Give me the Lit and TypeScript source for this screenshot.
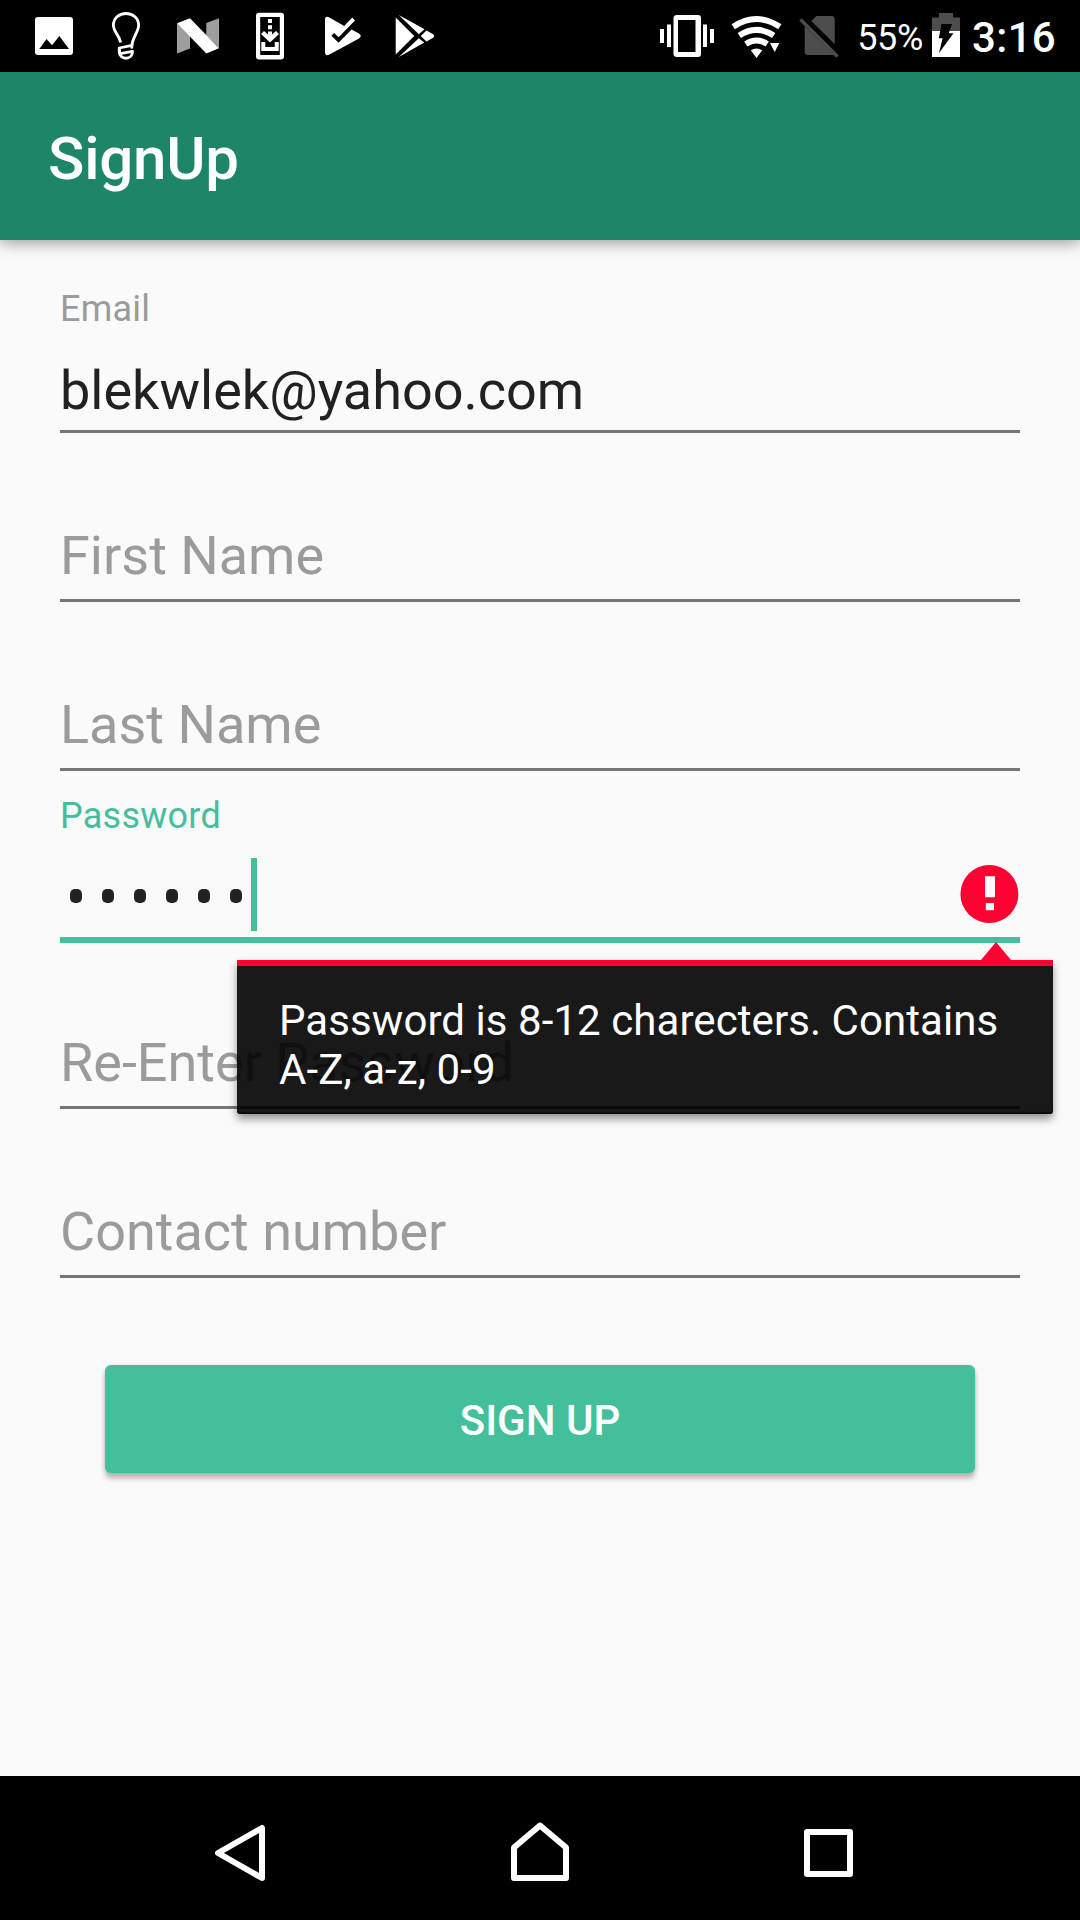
import { LitElement, html, css, svg, TemplateResult, SVGTemplateResult } from "lit";
import { customElement, property } from "lit/decorators.js";
import { classMap } from "lit/directives/class-map.js";

/* Notification glyphs, each drawn in a 72x72 cell. */
const notifications: SVGTemplateResult[] = [
  svg`<path fill="#fff" fill-rule="evenodd" d="M20 17H52Q55 17 55 20V52Q55 55 52 55H20Q17 55 17 52V20Q17 17 20 17ZM21.3 49H51L41.3 36L34 45.3L28.6 39Z"/>`,
  svg`<g fill="none" stroke="#fff" stroke-width="2.8" stroke-linejoin="round">
    <path d="M30.6 42.5C29.5 35 23.4 32 23.4 25.3C23.4 18.2 29 13.5 36 13.5S48.6 18.2 48.6 25.3C48.6 32 42.5 37 42 45.3L29.2 48V51.5C29.2 60.5 42.5 60.5 42.5 51.4L30.5 53.6"/>
    <path d="M29.4 47.5V52M41.8 44V48.5"/></g>`,
  svg`<path fill="#9e9e9e" d="M15 23L28 35.8V48.5L15 53.5ZM44.3 23L57 18.3V48L44.3 35.5Z"/>
    <path fill="#fff" d="M15 23.2L28 18.2L57 48.2L44.4 53.5Z"/>`,
  svg`<path fill="#fff" fill-rule="evenodd" d="M24 12.7H46Q49 12.7 49 15.7V56.6Q49 59.6 46 59.6H24Q21 59.6 21 56.6V15.7Q21 12.7 24 12.7ZM25.2 17V55H44.8V17Z" transform="translate(1 0)"/>
    <path fill="#fff" d="M34 19H38V23H34ZM34 25.3H38V29.3H34ZM34 31.5H38V34.5L42 31L45 34L36 42.6L27 34L30 31L34 34.5ZM27.3 42H31.3V47H40.7V42H44.7V51H27.3Z"/>`,
  svg`<path fill="#fff" d="M19 20Q19 15.5 23 17.3L38.2 26L46.2 17.6L49 20.4L32.6 37.3L28.2 33L25.4 35.7L32.6 42.8L45.5 29.6L53 33.6Q56.6 36 53 38.4L23 54.7Q19 56.3 19 52Z"/>`,
  svg`<path fill="#fff" d="M17.7 17.5L36.2 36L17.7 54.5ZM20.8 15L46.5 29.3L40.8 34.2ZM48.5 30.5L54.8 34Q57.5 36 54.8 38L48.5 41.6L42.8 36ZM40.8 38.2L46.3 42.6L20.8 57Z"/>`,
];

@customElement("status-bar")
export class StatusBar extends LitElement {
  static styles = css`
    :host { display: flex; height: 72px; background: #000; color: #fff; justify-content: space-between; }
    .left { display: flex; padding-left: 18px; }
    .right { display: flex; align-items: center; padding-right: 24px; }
    svg { display: block; flex: none; }
    .percent { font-size: 36px; line-height: 72px; margin: 3px 9px 0 18px; letter-spacing: -0.3px; }
    .clock { font-size: 42px; font-weight: 500; line-height: 72px; margin: 4px 0 0 12px; letter-spacing: 0.3px; }
  `;
  render() {
    return html`
      <div class="left">
        ${notifications.map((g) => html`<svg width="72" height="72" viewBox="0 0 72 72">${g}</svg>`)}
      </div>
      <div class="right">
        <svg width="54" height="72" viewBox="660 0 54 72" fill="#fff">
          <path fill-rule="evenodd" d="M677 15H698Q701 15 701 18V54Q701 57 698 57H677Q673.5 57 673.5 54V18Q673.5 15 677 15ZM678 20V52H695.5V20Z"/>
          <path d="M660 29h4v14h-4ZM667 24.5h4v22.5h-4ZM703 24.5h4v22.5h-4ZM710 29h4v14h-4Z"/>
        </svg>
        <svg width="85" height="72" viewBox="714 0 85 72" fill="none" stroke="#fff" stroke-width="6">
          <path d="M733.2 26.8Q756.5 11.3 779.8 26.8"/>
          <path d="M739.3 35.5Q756.5 24.3 773.7 35.5"/>
          <path d="M745.8 44Q756.5 37 767.2 44"/>
          <path fill="#fff" stroke="none" d="M750.8 50.3Q756.5 46.5 762.3 50.3L756.5 58ZM770 43H779.3L774.7 52Z"/>
        </svg>
        <svg width="40" height="72" viewBox="799 0 40 72">
          <path fill="#4d4d4d" d="M816.3 16H831.5Q834.7 16 834.7 19V44L811.3 21ZM804.7 26.2L834 55Q833 55 831.5 55H808Q804.7 55 804.7 52Z"/>
          <path stroke="#4d4d4d" stroke-width="3.4" d="M800.5 19.5L837.5 56.5"/>
        </svg>
        <div class="percent">55%</div>
        <svg width="28" height="72" viewBox="932 0 28 72">
          <path fill="#4d4d4d" d="M939 13H953V17.5H960V31H932V17.5H939Z"/>
          <path fill="#fff" d="M932 31H960V57H932Z"/>
          <path fill="#000" d="M941.5 24H952L948.7 33.3H953.5L939 53L942.6 38.3H938.8Z"/>
        </svg>
        <div class="clock">3:16</div>
      </div>`;
  }
}

@customElement("form-field")
export class FormField extends LitElement {
  @property() label = "";
  @property() value = "";
  @property({ type: Boolean }) active = false;
  @property({ type: Boolean }) secret = false;

  static styles = css`
    :host { display: block; height: 169px; box-sizing: border-box; }
    .field { display: flex; flex-direction: column; height: 169px; }
    .label { flex: none; height: 46px; line-height: 42px; padding-top: 22px; font-size: 36px; letter-spacing: 0.25px; color: #9b9b9b; }
    .active .label { color: #44bf9c; }
    .row { flex: none; display: flex; align-items: center; height: 96px; line-height: 96px; font-size: 54px; color: #212121; }
    .text { padding-top: 17px; white-space: pre; }
    .hint { padding-top: 10px; color: #9b9b9b; }
    .line { flex: none; height: 3px; background: #757575; }
    .active .line { height: 6px; background: #44bf9c; }
    .dots { display: flex; gap: 20px; padding: 14px 9px 0 10px; }
    .dot { width: 12px; height: 14px; border-radius: 5px; background: #212121; }
    .cursor { width: 6px; height: 73px; background: #44bf9c; margin-top: 11px; }
    .error { margin: 10px 1px 0 auto; display: block; }
  `;

  private entry(): TemplateResult {
    if (this.secret && this.value) {
      return html`
        <div class="dots">${[...this.value].map(() => html`<i class="dot"></i>`)}</div>
        <div class="cursor"></div>
        <svg class="error" width="60" height="60" viewBox="0 0 60 60">
          <circle cx="30.4" cy="30" r="29" fill="#ff0032"/>
          <path fill="#fafafa" d="M26 12.2H36V33.3H26ZM26.8 39H35V46.2H26.8Z"/>
        </svg>`;
    }
    return this.value
      ? html`<div class="text">${this.value}</div>`
      : html`<div class="text hint">${this.label}</div>`;
  }

  render() {
    return html`<div class=${classMap({ field: true, active: this.active })}>
      <div class="label">${this.value ? this.label : ""}</div>
      <div class="row">${this.entry()}</div>
      <div class="line"></div>
    </div>`;
  }
}

@customElement("app-root")
export class AppRoot extends LitElement {
  static styles = css`
    :host {
      display: flex; flex-direction: column; width: 1080px; height: 1920px; overflow: hidden;
      background: #fafafa; font-family: Roboto, "Liberation Sans", sans-serif;
    }
    .bar {
      height: 168px; flex: none; box-sizing: border-box; padding: 3px 48px 0; line-height: 168px;
      background: #1e8668; color: #fff; font-size: 60px; font-weight: 500; letter-spacing: -0.2px;
      box-shadow: 0 3px 14px rgba(0, 0, 0, 0.38);
    }
    .form { flex: 1; padding: 26px 60px 0; display: flex; flex-direction: column; }
    .anchor { position: relative; }
    .popup {
      position: absolute; left: 177px; top: 187px; width: 816px; height: 154px; box-sizing: border-box;
      border-top: 6px solid #ff0032; padding: 30px 0 0 42px; color: #fff; font-size: 42px; line-height: 49px;
      background: rgba(0, 0, 0, 0.9); background-clip: padding-box; border-radius: 0 0 3px 3px;
      white-space: nowrap; letter-spacing: 0.07px;
      box-shadow: 0 5px 9px rgba(0, 0, 0, 0.42), inset 0 -2px 1px rgba(0, 0, 0, 0.6);
    }
    .tip { position: absolute; left: 921px; top: 169px; z-index: 1; display: block; }
    .submit {
      box-sizing: border-box; margin: 85px 45px 0; height: 108px; line-height: 105px; padding: 3px 0 0;
      border: 0; border-radius: 6px;
      background: #44bf9c; color: #fff; text-align: center; font-family: inherit; font-size: 42px; font-weight: 500;
      box-shadow: 0 6px 5px rgba(0, 0, 0, 0.22), 0 1px 5px rgba(0, 0, 0, 0.15);
    }
    .nav { height: 144px; flex: none; background: #000; display: flex; justify-content: center; }
    .nav svg { display: block; }
  `;

  render() {
    return html`
      <status-bar></status-bar>
      <div class="bar">SignUp</div>
      <div class="form">
        <form-field label="Email" value="blekwlek@yahoo.com"></form-field>
        <form-field label="First Name"></form-field>
        <form-field label="Last Name"></form-field>
        <div class="anchor">
          <form-field label="Password" value="••••••" active secret></form-field>
          <svg class="tip" width="30" height="18" viewBox="0 0 30 18"><path fill="#ff0032" d="M15 0L30 18H0Z"/></svg>
          <div class="popup">Password is 8-12 charecters. Contains<br />A-Z, a-z, 0-9</div>
        </div>
        <form-field label="Re-Enter Password"></form-field>
        <form-field label="Contact number"></form-field>
        <button class="submit">SIGN UP</button>
      </div>
      <div class="nav">
        <svg width="720" height="144" viewBox="180 1776 720 144" fill="none" stroke="#fff" stroke-width="6" stroke-linejoin="round">
          <path d="M218 1853L262 1828V1878Z"/>
          <path d="M540 1825.5L566 1847.5V1878H514V1847.5Z"/>
          <path d="M807 1832H850V1874H807Z"/>
        </svg>
      </div>`;
  }
}
